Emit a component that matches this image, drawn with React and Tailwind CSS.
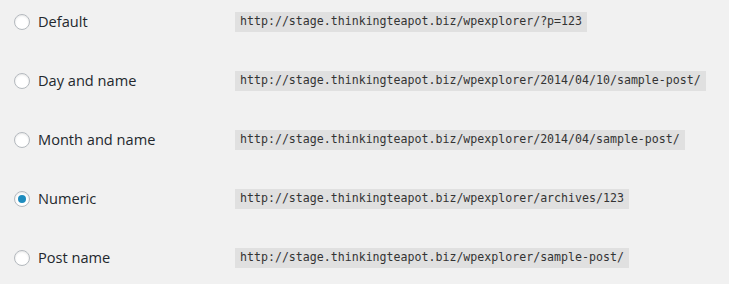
import React from 'react';

const options = [
  { label: 'Default', url: 'http://stage.thinkingteapot.biz/wpexplorer/?p=123' },
  { label: 'Day and name', url: 'http://stage.thinkingteapot.biz/wpexplorer/2014/04/10/sample-post/' },
  { label: 'Month and name', url: 'http://stage.thinkingteapot.biz/wpexplorer/2014/04/sample-post/' },
  { label: 'Numeric', url: 'http://stage.thinkingteapot.biz/wpexplorer/archives/123', checked: true },
  { label: 'Post name', url: 'http://stage.thinkingteapot.biz/wpexplorer/sample-post/' },
];

const Radio = ({ checked }) => (
  <span className="flex h-4 w-4 shrink-0 items-center justify-center rounded-full border border-[#b4b9be] bg-white shadow-[inset_0_1px_2px_rgba(0,0,0,0.1)]">
    {checked && <span className="h-2 w-2 rounded-full bg-[#1e8cbe]" />}
  </span>
);

export default function App() {
  return (
    <div className="min-h-[284px] w-full bg-[#f1f1f1] pt-[12px]">
      <div className="flex flex-col gap-[39px]">
        {options.map((o) => (
          <div key={o.label} className="flex h-5 items-center">
            <label className="flex w-[235px] shrink-0 items-center gap-2 pl-[14px]">
              <Radio checked={o.checked} />
              <span className="font-['Open_Sans',sans-serif] text-[14.6px] text-[#23282d]">{o.label}</span>
            </label>
            <code className="flex h-5 items-center bg-[#e0e0e0] px-[5px] font-['DejaVu_Sans_Mono',monospace] text-[11.6px] text-[#333]">
              {o.url}
            </code>
          </div>
        ))}
      </div>
    </div>
  );
}
